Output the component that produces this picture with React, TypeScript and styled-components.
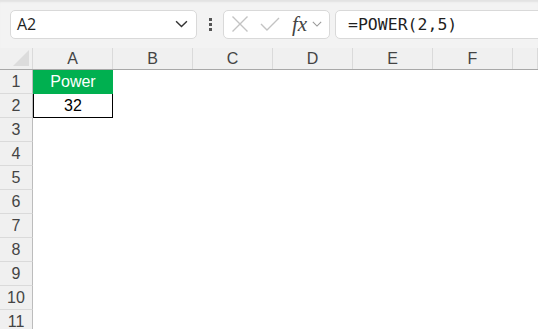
import React from "react";
import styled, { createGlobalStyle } from "styled-components";

const Global = createGlobalStyle`
  html, body { margin: 0; padding: 0; background: #ffffff; overflow: hidden; }
  body { width: 538px; height: 329px; font-family: "Liberation Sans", Arial, sans-serif; }
`;

const Page = styled.div`
  width: 538px;
  height: 329px;
  overflow: hidden;
  display: flex;
  flex-direction: column;
`;

const Toolbar = styled.div`
  height: 48px;
  flex: none;
  box-sizing: border-box;
  background: #f3f3f3;
  box-shadow: inset 0 3px 2px -1px #e2e2e2;
  display: flex;
  align-items: center;
  padding: 0 0 0 10px;
`;

const Box = styled.div<{ $w?: number; $grow?: boolean }>`
  box-sizing: border-box;
  height: 29px;
  background: #ffffff;
  border: 1px solid #d9d9d9;
  border-radius: 5px;
  display: flex;
  align-items: center;
  width: ${(p) => (p.$w ? `${p.$w}px` : "auto")};
  flex: ${(p) => (p.$grow ? "1 1 auto" : "none")};
  margin-right: ${(p) => (p.$grow ? "-12px" : "0")};
`;

const NameText = styled.span`
  font-family: "Open Sans", "Noto Sans", sans-serif;
  font-size: 16px;
  color: #1f1f1f;
  padding-left: 6px;
  flex: 1;
`;

const Dots = styled.div`
  width: 26px;
  display: flex;
  flex-direction: column;
  align-items: center;
  gap: 2px;
`;

const Dot = styled.span`
  width: 3px;
  height: 3px;
  background: #555;
`;

const Spacer = styled.div`
  width: 5px;
  flex: none;
`;

const FormulaText = styled.span`
  font-family: "DejaVu Sans Mono", "Liberation Mono", monospace;
  font-size: 16.5px;
  color: #1f1f1f;
  padding-left: 12px;
`;

const Fx = styled.span`
  font-family: "Liberation Serif", "DejaVu Serif", serif;
  font-style: italic;
  font-size: 21px;
  color: #444;
  margin-left: 12px;
  margin-right: 5px;
  line-height: 1;
`;

const Sheet = styled.div`
  flex: 1;
  display: flex;
  flex-direction: column;
`;

const HeaderRow = styled.div`
  height: 22px;
  box-sizing: border-box;
  display: flex;
  background: #f0f0f0;
  border-bottom: 1px solid #a8a8a8;
`;

const Corner = styled.div`
  width: 33px;
  flex: none;
  position: relative;
  box-sizing: border-box;
  border-right: 1px solid #dadada;
`;

const Triangle = styled.div`
  position: absolute;
  right: 3px;
  bottom: 3px;
  width: 0;
  height: 0;
  border-left: 16px solid transparent;
  border-bottom: 16px solid #dcdcdc;
`;

const ColHead = styled.div<{ $last?: boolean }>`
  width: ${(p) => (p.$last ? "auto" : "80px")};
  flex: ${(p) => (p.$last ? "1" : "none")};
  box-sizing: border-box;
  border-right: 1px solid #dadada;
  display: flex;
  align-items: center;
  justify-content: center;
  font-size: 16px;
  color: #444;
  padding-top: 1px;
`;

const Row = styled.div`
  height: 24px;
  flex: none;
  display: flex;
`;

const RowHead = styled.div`
  width: 33px;
  flex: none;
  box-sizing: border-box;
  background: #f0f0f0;
  border-right: 1px solid #bcbcbc;
  border-bottom: 1px solid #dadada;
  display: flex;
  align-items: center;
  justify-content: center;
  font-size: 16px;
  color: #444;
`;

const Cell = styled.div<{ $variant?: "title" | "value" }>`
  width: 80px;
  flex: none;
  box-sizing: border-box;
  display: flex;
  align-items: center;
  justify-content: center;
  font-size: 16px;
  background: ${(p) => (p.$variant === "title" ? "#00b050" : "#ffffff")};
  color: ${(p) => (p.$variant === "title" ? "#ffffff" : "#000000")};
  border: ${(p) => (p.$variant === "value" ? "1px solid #000" : "none")};
  border-top: none;
`;

const Chevron = ({ size = 12, color = "#333", style }: { size?: number; color?: string; style?: React.CSSProperties }) => (
  <svg width={size} height={size * 0.6} viewBox="0 0 12 7" style={style}>
    <polyline points="1,1 6,6 11,1" fill="none" stroke={color} strokeWidth="1.3" />
  </svg>
);

export default function App() {
  const rows = [3, 4, 5, 6, 7, 8, 9, 10, 11];
  return (
    <Page>
      <Global />
      <Toolbar>
        <Box $w={187}>
          <NameText>A2</NameText>
          <Chevron size={13} color="#333" style={{ marginRight: 8 }} />
        </Box>
        <Dots>
          <Dot />
          <Dot />
          <Dot />
        </Dots>
        <Box $w={107}>
          <svg width="18" height="18" viewBox="0 0 18 18" style={{ marginLeft: 7 }}>
            <path d="M1.5 1.5 L16.5 16.5 M16.5 1.5 L1.5 16.5" stroke="#c3c3c3" strokeWidth="1.4" fill="none" />
          </svg>
          <svg width="20" height="16" viewBox="0 0 20 16" style={{ marginLeft: 11 }}>
            <polyline points="1,8 7,14 19,2" stroke="#c3c3c3" strokeWidth="1.4" fill="none" />
          </svg>
          <Fx>fx</Fx>
          <Chevron size={10} color="#999" />
        </Box>
        <Spacer />
        <Box $grow>
          <FormulaText>=POWER(2,5)</FormulaText>
        </Box>
      </Toolbar>
      <Sheet>
        <HeaderRow>
          <Corner>
            <Triangle />
          </Corner>
          {["A", "B", "C", "D", "E", "F"].map((c) => (
            <ColHead key={c}>{c}</ColHead>
          ))}
          <ColHead $last />
        </HeaderRow>
        <Row>
          <RowHead>1</RowHead>
          <Cell $variant="title">Power</Cell>
        </Row>
        <Row>
          <RowHead>2</RowHead>
          <Cell $variant="value">32</Cell>
        </Row>
        {rows.map((r) => (
          <Row key={r}>
            <RowHead>{r}</RowHead>
          </Row>
        ))}
      </Sheet>
    </Page>
  );
}
